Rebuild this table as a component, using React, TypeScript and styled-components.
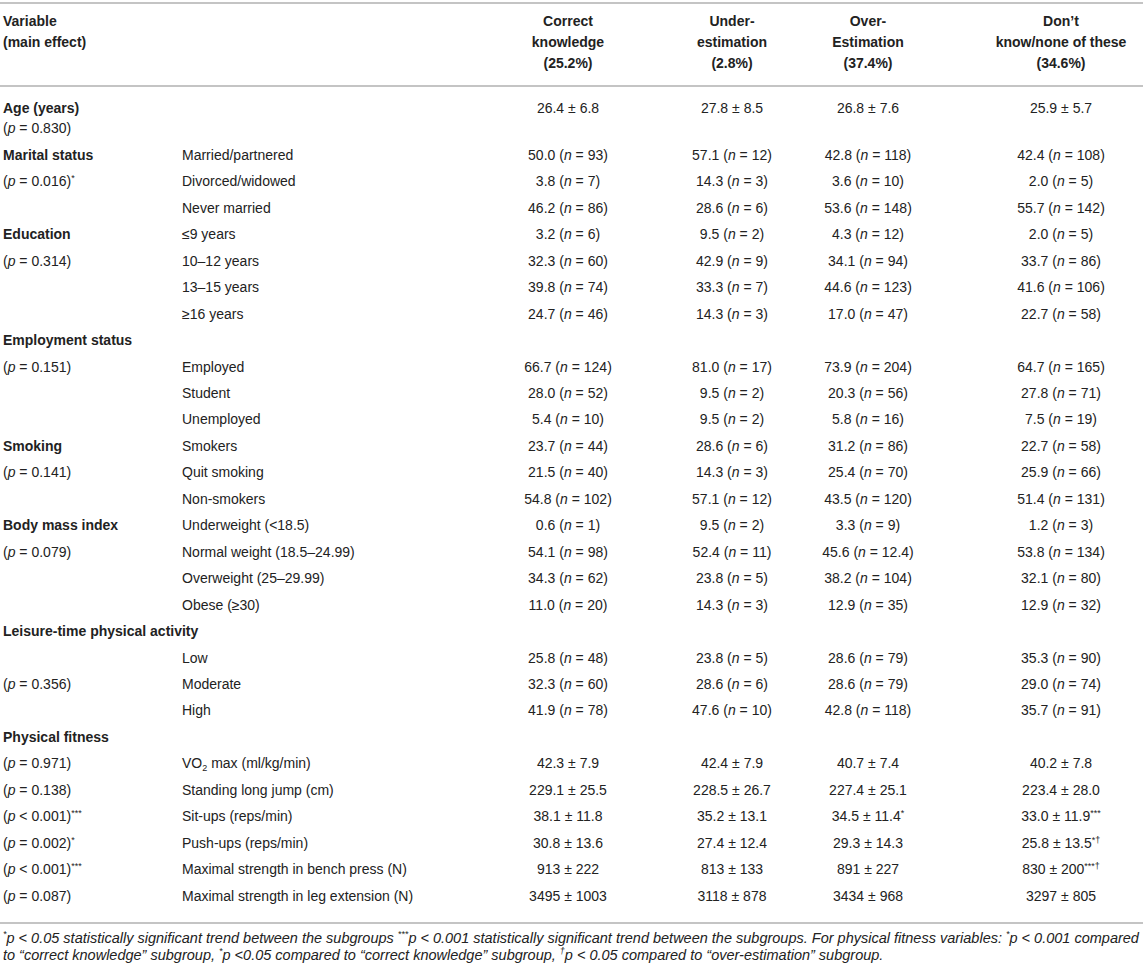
import React from "react";
import styled, { createGlobalStyle } from "styled-components";

const Global = createGlobalStyle`
  html, body { margin: 0; padding: 0; background: #ffffff; }
  body { font-family: "Liberation Sans", Arial, Helvetica, sans-serif; color: #222222; }
`;

const Wrap = styled.div`
  width: 1143px;
  padding-top: 2px;
`;

const Table = styled.table`
  width: 1143px;
  border-collapse: collapse;
  table-layout: fixed;
  font-size: 14px;
`;

const HeadCell = styled.th<{ $align?: "left" | "center"; $pl?: number }>`
  border-top: 2px solid #c4c4c4;
  border-bottom: 2px solid #c4c4c4;
  padding: 7px 3px 11px ${(p) => (p.$pl ?? 3)}px;
  line-height: 21px;
  font-weight: bold;
  text-align: ${(p) => p.$align ?? "center"};
  vertical-align: top;
  white-space: nowrap;
`;

const Row = styled.tr<{ $first?: boolean; $last?: boolean }>`
  & > td {
    padding-top: ${(p) => (p.$first ? 11 : 3)}px;
    padding-bottom: ${(p) => (p.$last ? 16 : 3)}px;
    border-bottom: ${(p) => (p.$last ? "2px solid #c4c4c4" : "none")};
  }
`;

const Cell = styled.td<{ $align?: "left" | "center"; $bold?: boolean; $pl?: number }>`
  padding-left: ${(p) => (p.$pl ?? 3)}px;
  padding-right: 3px;
  line-height: 20.45px;
  text-align: ${(p) => p.$align ?? "center"};
  font-weight: ${(p) => (p.$bold ? "bold" : "normal")};
  vertical-align: top;
  white-space: nowrap;
`;

const I = styled.i`
  font-style: italic;
`;

const Sup = styled.sup`
  font-size: 9px;
  line-height: 0;
  vertical-align: 5px;
`;

const Sub = styled.sub`
  font-size: 9px;
  line-height: 0;
  vertical-align: -3px;
`;

const Note = styled.p`
  margin: 6px 0 0 0;
  padding: 0 3px;
  font-size: 14.5px;
  line-height: 17px;
  font-style: italic;
  color: #222222;
`;

const NoteSup = styled.sup`
  font-size: 9px;
  line-height: 0;
  vertical-align: 6px;
`;

const N = (v: string, n: string) => (
  <>
    {v} (<I>n</I> = {n})
  </>
);

const PM = (a: string, b: string, s?: string) => (
  <>
    {a} ± {b}
    {s && <Sup>{s}</Sup>}
  </>
);

const P = (op: string, v: string, s?: string) => (
  <>
    (<I>p</I> {op} {v})
    {s && <Sup>{s}</Sup>}
  </>
);

type R = {
  a?: React.ReactNode;
  aBold?: boolean;
  b?: React.ReactNode;
  v?: React.ReactNode[];
};

const rows: R[] = [
  { a: "Marital status", aBold: true, b: "Married/partnered", v: [N("50.0", "93"), N("57.1", "12"), N("42.8", "118"), N("42.4", "108")] },
  { a: P("=", "0.016", "*"), b: "Divorced/widowed", v: [N("3.8", "7"), N("14.3", "3"), N("3.6", "10"), N("2.0", "5")] },
  { b: "Never married", v: [N("46.2", "86"), N("28.6", "6"), N("53.6", "148"), N("55.7", "142")] },
  { a: "Education", aBold: true, b: "≤9 years", v: [N("3.2", "6"), N("9.5", "2"), N("4.3", "12"), N("2.0", "5")] },
  { a: P("=", "0.314"), b: "10–12 years", v: [N("32.3", "60"), N("42.9", "9"), N("34.1", "94"), N("33.7", "86")] },
  { b: "13–15 years", v: [N("39.8", "74"), N("33.3", "7"), N("44.6", "123"), N("41.6", "106")] },
  { b: "≥16 years", v: [N("24.7", "46"), N("14.3", "3"), N("17.0", "47"), N("22.7", "58")] },
  { a: "Employment status", aBold: true },
  { a: P("=", "0.151"), b: "Employed", v: [N("66.7", "124"), N("81.0", "17"), N("73.9", "204"), N("64.7", "165")] },
  { b: "Student", v: [N("28.0", "52"), N("9.5", "2"), N("20.3", "56"), N("27.8", "71")] },
  { b: "Unemployed", v: [N("5.4", "10"), N("9.5", "2"), N("5.8", "16"), N("7.5", "19")] },
  { a: "Smoking", aBold: true, b: "Smokers", v: [N("23.7", "44"), N("28.6", "6"), N("31.2", "86"), N("22.7", "58")] },
  { a: P("=", "0.141"), b: "Quit smoking", v: [N("21.5", "40"), N("14.3", "3"), N("25.4", "70"), N("25.9", "66")] },
  { b: "Non-smokers", v: [N("54.8", "102"), N("57.1", "12"), N("43.5", "120"), N("51.4", "131")] },
  { a: "Body mass index", aBold: true, b: "Underweight (<18.5)", v: [N("0.6", "1"), N("9.5", "2"), N("3.3", "9"), N("1.2", "3")] },
  { a: P("=", "0.079"), b: "Normal weight (18.5–24.99)", v: [N("54.1", "98"), N("52.4", "11"), N("45.6", "12.4"), N("53.8", "134")] },
  { b: "Overweight (25–29.99)", v: [N("34.3", "62"), N("23.8", "5"), N("38.2", "104"), N("32.1", "80")] },
  { b: "Obese (≥30)", v: [N("11.0", "20"), N("14.3", "3"), N("12.9", "35"), N("12.9", "32")] },
  { a: "Leisure-time physical activity", aBold: true },
  { b: "Low", v: [N("25.8", "48"), N("23.8", "5"), N("28.6", "79"), N("35.3", "90")] },
  { a: P("=", "0.356"), b: "Moderate", v: [N("32.3", "60"), N("28.6", "6"), N("28.6", "79"), N("29.0", "74")] },
  { b: "High", v: [N("41.9", "78"), N("47.6", "10"), N("42.8", "118"), N("35.7", "91")] },
  { a: "Physical fitness", aBold: true },
  {
    a: P("=", "0.971"),
    b: (
      <>
        VO<Sub>2</Sub> max (ml/kg/min)
      </>
    ),
    v: [PM("42.3", "7.9"), PM("42.4", "7.9"), PM("40.7", "7.4"), PM("40.2", "7.8")],
  },
  { a: P("=", "0.138"), b: "Standing long jump (cm)", v: [PM("229.1", "25.5"), PM("228.5", "26.7"), PM("227.4", "25.1"), PM("223.4", "28.0")] },
  { a: P("<", "0.001", "***"), b: "Sit-ups (reps/min)", v: [PM("38.1", "11.8"), PM("35.2", "13.1"), PM("34.5", "11.4", "*"), PM("33.0", "11.9", "***")] },
  { a: P("=", "0.002", "*"), b: "Push-ups (reps/min)", v: [PM("30.8", "13.6"), PM("27.4", "12.4"), PM("29.3", "14.3"), PM("25.8", "13.5", "*†")] },
  { a: P("<", "0.001", "***"), b: "Maximal strength in bench press (N)", v: [PM("913", "222"), PM("813", "133"), PM("891", "227"), PM("830", "200", "***†")] },
  { a: P("=", "0.087"), b: "Maximal strength in leg extension (N)", v: [PM("3495", "1003"), PM("3118", "878"), PM("3434", "968"), PM("3297", "805")] },
];

const colWidths = [179, 307, 164, 164, 108, 221];
const lastColPad = 60;

export default function App() {
  return (
    <>
      <Global />
      <Wrap>
        <Table>
          <colgroup>
            {colWidths.map((w, i) => (
              <col key={i} style={{ width: w }} />
            ))}
          </colgroup>
          <thead>
            <tr>
              <HeadCell $align="left">
                Variable
                <br />
                (main effect)
              </HeadCell>
              <HeadCell $align="left" />
              <HeadCell>
                Correct
                <br />
                knowledge
                <br />
                (25.2%)
              </HeadCell>
              <HeadCell>
                Under-
                <br />
                estimation
                <br />
                (2.8%)
              </HeadCell>
              <HeadCell>
                Over-
                <br />
                Estimation
                <br />
                (37.4%)
              </HeadCell>
              <HeadCell $pl={lastColPad}>
                Don’t
                <br />
                know/none of these
                <br />
                (34.6%)
              </HeadCell>
            </tr>
          </thead>
          <tbody>
            <Row $first>
              <Cell $align="left">
                <b>Age (years)</b>
                <br />
                {P("=", "0.830")}
              </Cell>
              <Cell $align="left" />
              <Cell>{PM("26.4", "6.8")}</Cell>
              <Cell>{PM("27.8", "8.5")}</Cell>
              <Cell>{PM("26.8", "7.6")}</Cell>
              <Cell $pl={lastColPad}>{PM("25.9", "5.7")}</Cell>
            </Row>
            {rows.map((r, i) => (
              <Row key={i} $last={i === rows.length - 1}>
                <Cell $align="left" $bold={r.aBold}>
                  {r.a}
                </Cell>
                <Cell $align="left">{r.b}</Cell>
                {[0, 1, 2, 3].map((k) => (
                  <Cell key={k} $pl={k === 3 ? lastColPad : undefined}>
                    {r.v ? r.v[k] : null}
                  </Cell>
                ))}
              </Row>
            ))}
          </tbody>
        </Table>
        <Note>
          <NoteSup>*</NoteSup>p &lt; 0.05 statistically significant trend between the subgroups <NoteSup>***</NoteSup>p &lt; 0.001
          statistically significant trend between the subgroups. For physical fitness variables: <NoteSup>*</NoteSup>p &lt; 0.001
          compared to “correct knowledge” subgroup, <NoteSup>*</NoteSup>p &lt;0.05 compared to “correct knowledge” subgroup,{" "}
          <NoteSup>†</NoteSup>p &lt; 0.05 compared to “over-estimation” subgroup.
        </Note>
      </Wrap>
    </>
  );
}
